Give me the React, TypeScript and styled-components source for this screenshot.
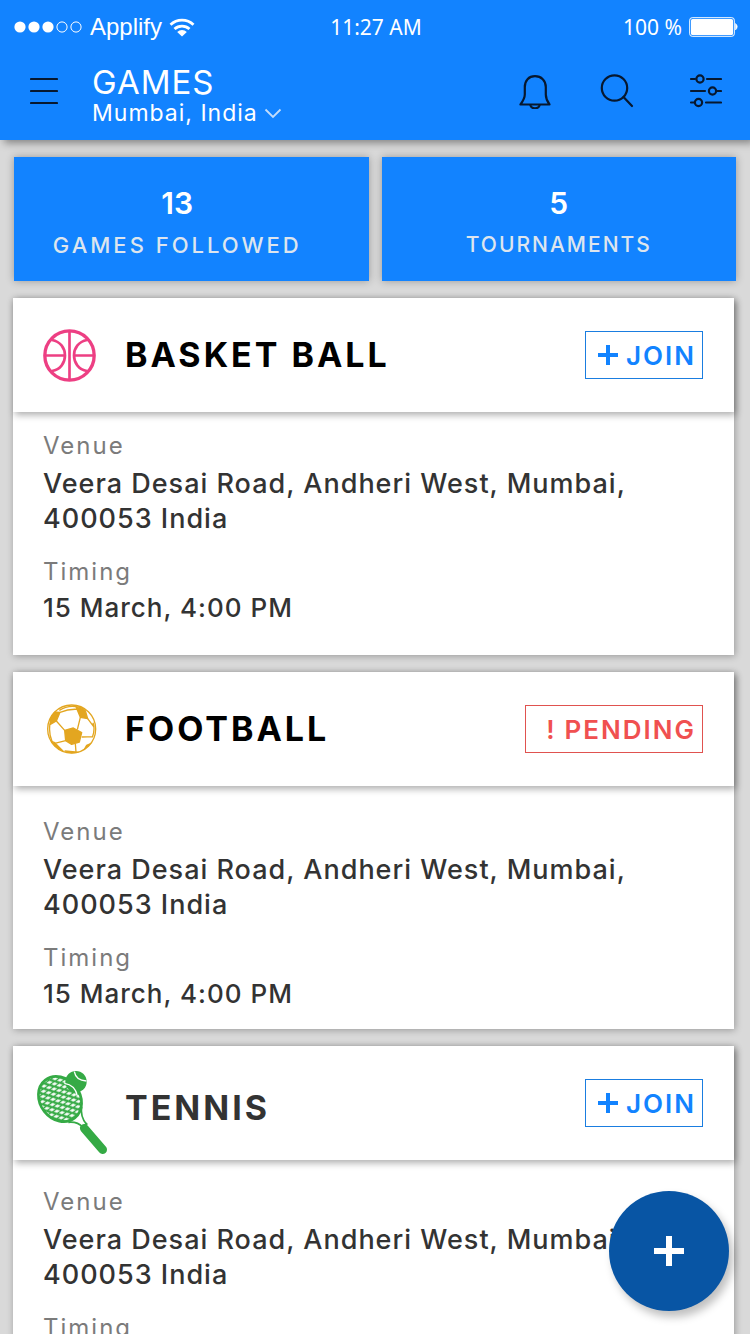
import React from 'react';
import styled, { createGlobalStyle } from 'styled-components';

const GlobalStyle = createGlobalStyle`
  * { box-sizing: border-box; }
  body { margin: 0; background: #d9d9d9; font-family: Inter, Roboto, sans-serif; }
  button { font: inherit; cursor: pointer; }
  h1, h2, p, dl, dd { margin: 0; }
`;

const Screen = styled.div`
  height: 100vh;
  display: flex;
  flex-direction: column;
  overflow: hidden;
  background: #d9d9d9;
`;

const TopBar = styled.header`
  flex: none;
  position: relative;
  z-index: 1;
  background: #1283ff;
  box-shadow: 4px 3px 8px rgba(0, 0, 0, 0.4);
`;

const StatusBar = styled.div`
  display: grid;
  grid-template-columns: 1fr auto 1fr;
  align-items: center;
  height: 54px;
  padding: 0 12px 0 14px;
  color: #fff;
  font-family: "Noto Sans", "Open Sans", sans-serif;
  font-size: 21px;
`;

const StatusGroup = styled.div<{ $end?: boolean }>`
  display: flex;
  align-items: center;
  justify-content: ${p => (p.$end ? 'flex-end' : 'flex-start')};
  gap: 7px;
`;

const Carrier = styled.span`
  font-family: "Liberation Sans", Arial, sans-serif;
  font-size: 24px;
`;

const NavBar = styled.div`
  display: flex;
  align-items: center;
  height: 86px;
  padding: 0 28px 12px 30px;
`;

const IconButton = styled.button`
  display: flex;
  padding: 0;
  border: 0;
  background: none;
  color: #07182f;
`;

const Heading = styled.div`
  flex: 1;
  margin-left: 34px;
  padding-top: 10px;
  color: #fff;
`;

const PageTitle = styled.h1`
  font-size: 33px;
  line-height: 34px;
  font-weight: 400;
  letter-spacing: 1px;
`;

const LocationButton = styled.button`
  display: flex;
  align-items: center;
  gap: 6px;
  padding: 0;
  border: 0;
  background: none;
  color: #fff;
  font-size: 23px;
  line-height: 28px;
  letter-spacing: 1px;
`;

const NavActions = styled.div`
  display: flex;
  align-items: center;
  gap: 49px;

  & > :last-child {
    margin-left: 5px;
  }
`;

const Content = styled.main`
  flex: 1;
  min-height: 0;
  overflow-y: auto;
  scrollbar-width: none;
  padding: 17px 14px 18px 13px;
`;

const Stats = styled.section`
  display: grid;
  grid-template-columns: 1fr 1fr;
  gap: 13px;
  padding-left: 1px;
  margin-bottom: 17px;
`;

const Stat = styled.div<{ $compact?: boolean }>`
  display: flex;
  flex-direction: column;
  align-items: center;
  height: 124px;
  padding: 28px ${p => (p.$compact ? 0 : 28)}px 0 0;
  background: #1283ff;
  box-shadow: 0 0 8px rgba(0, 0, 0, 0.3);
  color: #fff;
`;

const StatValue = styled.strong`
  font-size: 30px;
  line-height: 36px;
  font-weight: 600;
`;

const StatLabel = styled.span<{ $compact?: boolean }>`
  margin-top: 10px;
  color: #dde5ee;
  font-size: ${p => (p.$compact ? 21 : 22)}px;
  line-height: 28px;
  font-weight: 500;
  letter-spacing: ${p => (p.$compact ? 2 : 3)}px;
`;

const CardList = styled.section`
  display: flex;
  flex-direction: column;
  gap: 17px;
  padding-right: 2px;
`;

const Card = styled.article`
  background: #fff;
  box-shadow: 1px 1px 7px rgba(0, 0, 0, 0.3);
`;

const CardHeader = styled.header`
  display: flex;
  align-items: center;
  justify-content: space-between;
  height: 114px;
  padding: 0 31px 0 23px;
  background: #fff;
  box-shadow: 2px 3px 7px rgba(0, 0, 0, 0.32);
`;

const Sport = styled.div<{ $muted?: boolean }>`
  display: flex;
  align-items: center;
  gap: 17px;
  padding-top: ${p => (p.$muted ? 10 : 0)}px;
  color: ${p => (p.$muted ? '#333' : '#000')};
`;

const SportName = styled.h2`
  font-size: 34px;
  line-height: 40px;
  font-weight: 700;
  letter-spacing: 3px;
`;

const Action = styled.button<{ $pending?: boolean }>`
  display: flex;
  align-items: center;
  justify-content: flex-end;
  gap: 8px;
  width: ${p => (p.$pending ? 178 : 118)}px;
  height: 48px;
  padding: 0 6px 0 0;
  border: 1px solid ${p => (p.$pending ? '#e0524f' : '#1a7de0')};
  background: #fff;
  color: ${p => (p.$pending ? '#f05050' : '#1283ff')};
  font-size: 26px;
  font-weight: 600;
  letter-spacing: 2px;
`;

const Details = styled.dl<{ $top: number }>`
  min-height: 243px;
  padding: ${p => p.$top}px 30px 0;
`;

const Label = styled.dt`
  color: #7b7b7b;
  font-size: 24px;
  line-height: 32px;
  letter-spacing: 2px;
`;

const Value = styled.dd`
  color: #333;
  font-size: 27px;
  line-height: 35px;
  font-weight: 500;
  letter-spacing: 1px;
  padding: 4px 0 20px;

  &:last-child {
    padding: 2px 0 0;
    font-size: 26px;
  }
`;

const AddButton = styled.button`
  position: fixed;
  right: 21px;
  bottom: 23px;
  z-index: 2;
  display: flex;
  align-items: center;
  justify-content: center;
  width: 120px;
  height: 120px;
  border: 0;
  border-radius: 50%;
  background: #0855a4;
  box-shadow: 4px 6px 8px rgba(0, 0, 0, 0.25);
  color: #fff;
`;

const SignalDots = () => (
  <svg width="69" height="12" viewBox="0 0 69 12" aria-hidden="true">
    {[0, 1, 2, 3, 4].map(i => (
      <circle key={i} cx={6 + i * 14} cy="6" r={i < 3 ? 5.6 : 5.1} fill={i < 3 ? '#fff' : 'none'} stroke="#fff" strokeWidth={i < 3 ? 0 : 1} />
    ))}
  </svg>
);

const WifiIcon = () => (
  <svg width="26" height="19" viewBox="0 0 26 19" fill="none" stroke="#fff" strokeWidth="2.8" aria-hidden="true">
    <path d="M1.5 6.8a16.5 16.5 0 0 1 23 0M5.5 11a11 11 0 0 1 15 0" />
    <path d="M13 18.4 8.2 13.9a7.2 7.2 0 0 1 9.6 0Z" fill="#fff" stroke="none" />
  </svg>
);

const BatteryIcon = () => (
  <svg width="49" height="20" viewBox="0 0 49 20" aria-hidden="true">
    <rect x="0.7" y="0.7" width="44.6" height="18.6" rx="2.5" fill="none" stroke="#fff" strokeWidth="1" />
    <rect x="2" y="2" width="42" height="16" rx="1.5" fill="#fff" />
    <path d="M46.5 6.5q3.5 3 0 6.5Z" fill="#fff" stroke="#fff" strokeWidth=".6" />
  </svg>
);

const MenuIcon = () => (
  <svg width="28" height="28" viewBox="0 0 28 28" stroke="currentColor" strokeWidth="2.2" strokeLinecap="round" aria-hidden="true">
    <path d="M1 2h26M1 14h26M1 26h26" />
  </svg>
);

const BellIcon = () => (
  <svg width="32" height="36" viewBox="0 0 32 36" fill="none" stroke="currentColor" strokeWidth="2.2" strokeLinejoin="round" aria-hidden="true">
    <path d="M1.5 31.5h29C28 28 26.800 24.800 26.800 21.500V14C26.800 7.500 22.300 3.200 16 3.200S5.800 7.500 5.800 14v7.500c0 3.300-1.800 6.500-4.300 10Z" />
    <path d="M11.300 31.500c.5 5 8.900 5 9.400 0" />
  </svg>
);

const SearchIcon = () => (
  <svg width="34" height="34" viewBox="0 0 34 34" fill="none" stroke="currentColor" strokeWidth="2.2" strokeLinecap="round" aria-hidden="true">
    <circle cx="14.5" cy="14" r="12.700" />
    <path d="m23.500 23 8.500 9" />
  </svg>
);

const SlidersIcon = () => (
  <svg width="34" height="34" viewBox="0 0 34 34" fill="none" stroke="currentColor" strokeWidth="2.2" strokeLinecap="round" aria-hidden="true">
    <circle cx="12" cy="5" r="3.600" />
    <circle cx="24.500" cy="17" r="3.600" />
    <circle cx="10.500" cy="28.500" r="3.600" />
    <path d="M3 5h4M19 5h14M3 17h14M29.500 17H33M3 28.500h3M18 28.500h15" />
  </svg>
);

const ChevronIcon = () => (
  <svg width="18" height="11" viewBox="0 0 18 11" fill="none" stroke="#c3ddfb" strokeWidth="1.8" aria-hidden="true">
    <path d="m1.500 1.500 7.500 7.500 7.500-7.500" />
  </svg>
);

const PlusIcon = ({ size, weight }: { size: number; weight: number }) => (
  <svg width={size} height={size} viewBox={`0 0 ${size} ${size}`} stroke="currentColor" strokeWidth={weight} aria-hidden="true">
    <path d={`M${size / 2} 0V${size}M0 ${size / 2}H${size}`} />
  </svg>
);

const BasketballIcon = () => (
  <svg width="72" height="94" viewBox="48 -6 216 282" fill="none" stroke="#ed3f83" strokeWidth="8" aria-hidden="true">
    <circle cx="148.500" cy="136.500" r="74" strokeWidth="10" />
    <path d="M148.500 64v146M75 136.500h59M163 136.500h60M96 90c52 9 52 84 0 93M201 90c-52 9-52 84 0 93" />
  </svg>
);

const FootballIcon = () => (
  <svg width="72" height="94" viewBox="48 -24 216 282" fill="none" stroke="#e3a620" strokeWidth="4" strokeLinejoin="round" aria-hidden="true">
    <defs>
      <clipPath id="ball"><circle cx="155" cy="117" r="73" /></clipPath>
    </defs>
    <circle cx="155" cy="117" r="72" />
    <g clipPath="url(#ball)">
      <g fill="#e3a620">
        <path d="m134 121 26-7 25 14-7 28-23 7-18-11Z" />
        <path d="m100 66 20 1-11 26-18 10c-1-15 2-27 9-37Z" />
        <path d="M168 50c12 1 20 4 28 12l7 24-22-4Z" />
        <path d="m104 158-11-5c9 16 21 27 38 32ZM214 160l-14 6-8 14ZM135 183l30 3 17 2c-17 5-34 3-47-5Z" />
      </g>
      <path d="m109 93 25 28M172 119l9-37M185 141l34-1M166 161l2 25M137 152l-33 8M120 67c15-6 38-10 52-9M118 61c16-10 34-14 50-11M90 100c-3 20-1 38 6 54M203 86l18 24M219 98c5 14 4 28-2 44" />
    </g>
  </svg>
);

const TennisIcon = () => (
  <svg width="72" height="94" viewBox="48 6 216 282" fill="none" stroke="#35aa45" aria-hidden="true">
    <defs>
      <pattern id="strings" width="20" height="24" patternUnits="userSpaceOnUse" patternTransform="rotate(4)">
        <rect width="20" height="24" fill="#35aa45" />
        <path d="M1 0h12l6 9H7ZM-9 12H3l6 9H-3ZM11 12h12l6 9H17Z" fill="#fff" />
      </pattern>
    </defs>
    <ellipse cx="120" cy="120" rx="60" ry="72" transform="rotate(-38 120 120)" fill="url(#strings)" strokeWidth="8" />
    <path d="M145 190c20-2 33 3 43 15M185 143c-3 20 2 38 14 52" strokeWidth="5" />
    <path d="m193 208 55 64" strokeWidth="26" strokeLinecap="round" />
    <path d="M181 208 202 193" strokeWidth="6" />
    <circle cx="168" cy="68" r="32" fill="#35aa45" stroke="none" />
    <path d="M163 38c3 17 17 27 36 28" stroke="#fff" strokeWidth="4" />
    <path d="M133 73c21 3 35 16 39 38" stroke="#fff" strokeWidth="4" />
  </svg>
);

type Game = { name: string; icon: React.ReactNode; pending?: boolean; muted?: boolean; top: number };

const games: Game[] = [
  { name: 'BASKET BALL', icon: <BasketballIcon />, top: 18 },
  { name: 'FOOTBALL', icon: <FootballIcon />, pending: true, top: 30 },
  { name: 'TENNIS', icon: <TennisIcon />, muted: true, top: 26 },
];

const GameCard = ({ game }: { game: Game }) => (
  <Card>
    <CardHeader>
      <Sport $muted={game.muted}>
        {game.icon}
        <SportName>{game.name}</SportName>
      </Sport>
      <Action type="button" $pending={game.pending}>
        {game.pending ? <span>!</span> : <PlusIcon size={20} weight={4} />}
        {game.pending ? 'PENDING' : 'JOIN'}
      </Action>
    </CardHeader>
    <Details $top={game.top}>
      <Label>Venue</Label>
      <Value>
        Veera Desai Road, Andheri West, Mumbai,
        <br />
        400053 India
      </Value>
      <Label>Timing</Label>
      <Value>15 March, 4:00 PM</Value>
    </Details>
  </Card>
);

export default function App() {
  return (
    <Screen>
      <GlobalStyle />
      <TopBar>
        <StatusBar>
          <StatusGroup>
            <SignalDots />
            <Carrier>Applify</Carrier>
            <WifiIcon />
          </StatusGroup>
          <span>11:27 AM</span>
          <StatusGroup $end>
            <span>100 %</span>
            <BatteryIcon />
          </StatusGroup>
        </StatusBar>
        <NavBar>
          <IconButton type="button" aria-label="Menu"><MenuIcon /></IconButton>
          <Heading>
            <PageTitle>GAMES</PageTitle>
            <LocationButton type="button">Mumbai, India <ChevronIcon /></LocationButton>
          </Heading>
          <NavActions>
            <IconButton type="button" aria-label="Notifications"><BellIcon /></IconButton>
            <IconButton type="button" aria-label="Search"><SearchIcon /></IconButton>
            <IconButton type="button" aria-label="Filters"><SlidersIcon /></IconButton>
          </NavActions>
        </NavBar>
      </TopBar>
      <Content>
        <Stats>
          <Stat><StatValue>13</StatValue><StatLabel>GAMES FOLLOWED</StatLabel></Stat>
          <Stat $compact><StatValue>5</StatValue><StatLabel $compact>TOURNAMENTS</StatLabel></Stat>
        </Stats>
        <CardList>
          {games.map(game => <GameCard key={game.name} game={game} />)}
        </CardList>
      </Content>
      <AddButton type="button" aria-label="Add game"><PlusIcon size={30} weight={6} /></AddButton>
    </Screen>
  );
}
